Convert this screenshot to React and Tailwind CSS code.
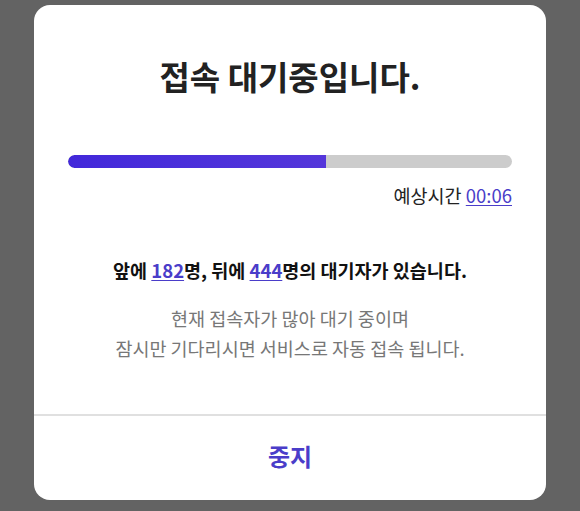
export default function App() {
  const font = { fontFamily: '"Noto Sans CJK KR", "Noto Sans", sans-serif' };
  return (
    <div className="w-full h-[511px] bg-[#636363] pt-[5px] px-[34px]" style={font}>
      <div className="bg-white rounded-[16px] h-[495px] flex flex-col">
        <div className="px-[34px] flex flex-col flex-1">
          <h1 className="mt-[47px] text-center text-[33px] leading-[48px] font-bold text-[#222]">
            접속 대기중입니다.
          </h1>
          <div className="mt-[55px] h-[13px] rounded-full bg-[#cccccc] overflow-hidden">
            <div className="h-full w-[58%] rounded-l-full bg-gradient-to-r from-[#4228da] to-[#5436da]" />
          </div>
          <div className="mt-[14px] text-right text-[18.5px] leading-[26px] text-[#222]">
            예상시간 <span className="text-[#4a3dc9] underline underline-offset-2">00:06</span>
          </div>
          <p className="mt-[49px] text-center text-[18.5px] leading-[26px] font-bold text-[#111]">
            앞에 <span className="text-[#4a3dc9] underline underline-offset-2">182</span>명, 뒤에{' '}
            <span className="text-[#4a3dc9] underline underline-offset-2">444</span>명의 대기자가 있습니다.
          </p>
          <div className="mt-[20px] text-center text-[18.5px] leading-[30px] text-[#777]">
            <p>현재 접속자가 많아 대기 중이며</p>
            <p>잠시만 기다리시면 서비스로 자동 접속 됩니다.</p>
          </div>
        </div>
        <div className="h-[2px] bg-[#e0e0e0]" />
        <button className="h-[84px] pb-[4px] flex items-center justify-center text-[24px] font-bold text-[#4a3dc9]">
          중지
        </button>
      </div>
    </div>
  );
}
